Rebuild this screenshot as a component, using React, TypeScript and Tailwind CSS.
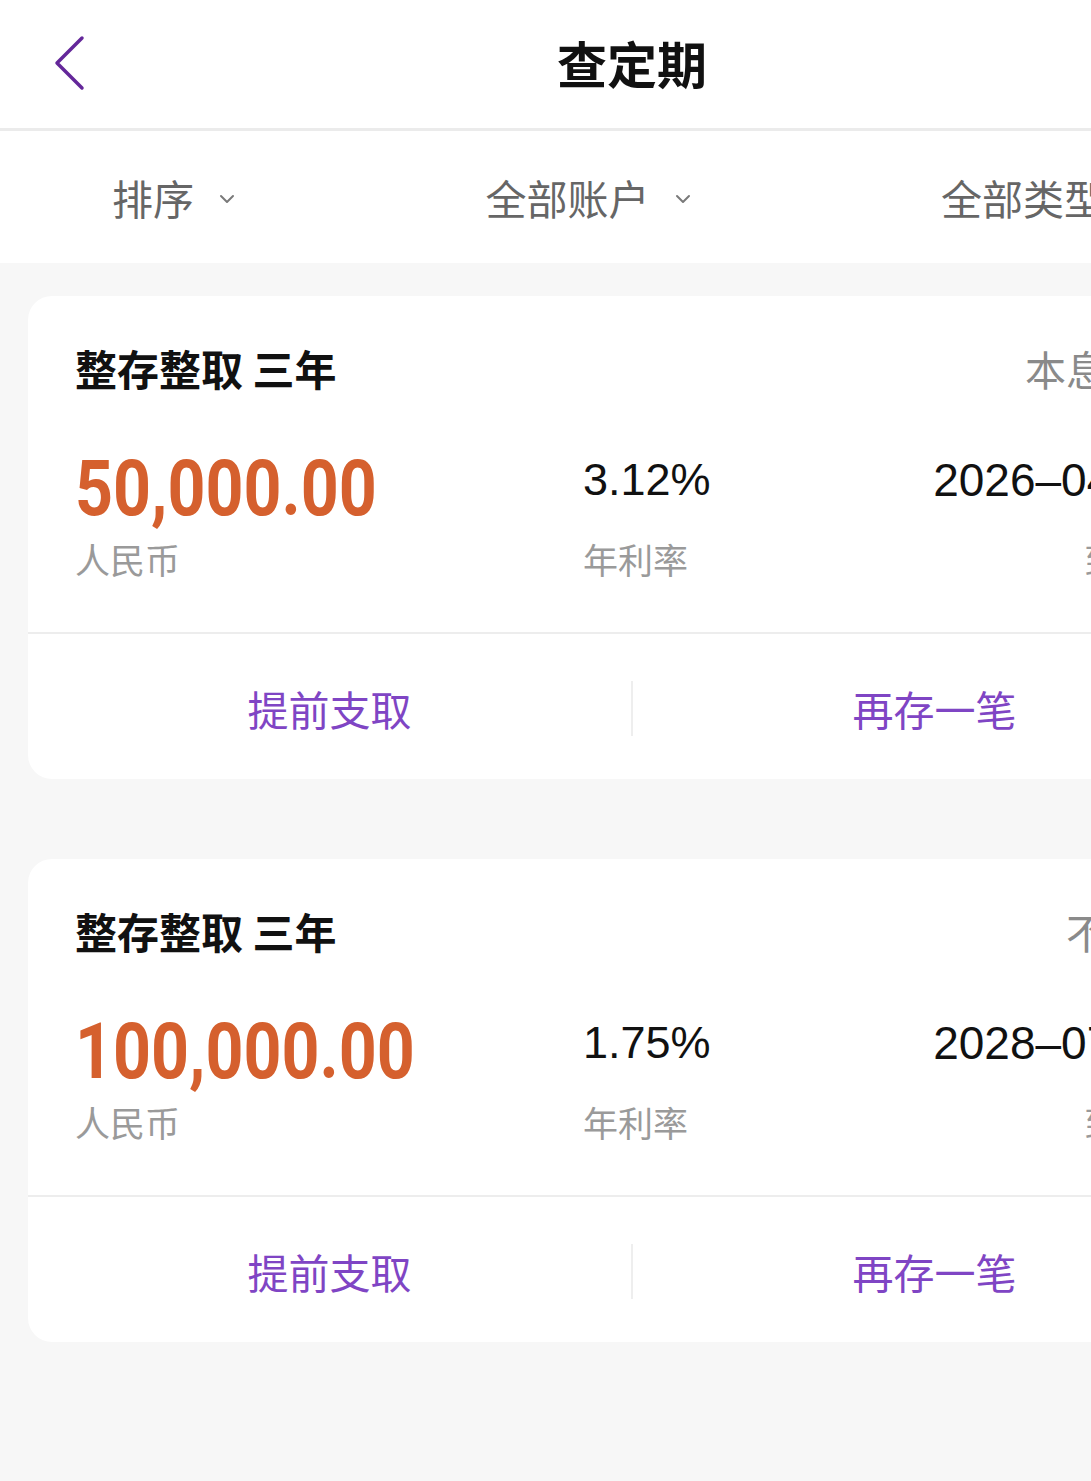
import React from "react";

interface Deposit {
  name: string;
  mode: string;
  amount: string;
  rate: string;
  dueDate: string;
}

const deposits: Deposit[] = [
  { name: "整存整取 三年", mode: "本息转存", amount: "50,000.00", rate: "3.12%", dueDate: "2026–04–18" },
  { name: "整存整取 三年", mode: "不转存", amount: "100,000.00", rate: "1.75%", dueDate: "2028–07–12" },
];

const cjk = "font-['Noto_Sans_CJK_SC','Noto_Sans',sans-serif]";
const num = "font-['Liberation_Sans','Noto_Sans_CJK_SC',sans-serif]";

const ChevronDown = () => (
  <svg width="16" height="10" viewBox="0 0 16 10" fill="none" className="ml-[25px] mt-[4px]">
    <polyline points="2,2 8,8 14,2" stroke="#7a7a7a" strokeWidth="2" strokeLinecap="round" strokeLinejoin="round" />
  </svg>
);

const Filter = ({ label }: { label: string }) => (
  <div className="flex items-center">
    <span className={`${cjk} text-[41px] leading-[48px] text-[#666666]`}>{label}</span>
    <ChevronDown />
  </div>
);

const DepositCard = ({ d }: { d: Deposit }) => (
  <div className="bg-white rounded-[24px]">
    <div className="px-[47px] pt-[50px] pb-[52px] border-b-2 border-[#ededed]">
      <div className="flex items-center justify-between">
        <span className={`${cjk} text-[42px] leading-[44px] font-bold text-[#111111]`}>{d.name}</span>
        <span className={`${cjk} text-[41px] leading-[44px] text-[#8a8a8a]`}>{d.mode}</span>
      </div>
      <div className="grid grid-cols-[508px_1fr_auto] mt-[66px]">
        <div className="flex flex-col">
          <span className="font-['Roboto',sans-serif] font-bold text-[78px] leading-[66px] text-[#d5602e] inline-block origin-left scale-x-[0.85] whitespace-nowrap">
            {d.amount}
          </span>
          <span className={`${cjk} text-[35px] leading-[42px] text-[#9a9a9a] mt-[16px]`}>人民币</span>
        </div>
        <div className="flex flex-col justify-between">
          <span className={`${num} text-[45px] leading-[48px] text-[#111111]`}>{d.rate}</span>
          <span className={`${cjk} text-[35px] leading-[42px] text-[#9a9a9a]`}>年利率</span>
        </div>
        <div className="flex flex-col justify-between items-end">
          <span className={`${num} text-[46px] leading-[48px] text-[#111111] whitespace-nowrap`}>{d.dueDate}</span>
          <span className={`${cjk} text-[35px] leading-[42px] text-[#9a9a9a]`}>到期日</span>
        </div>
      </div>
    </div>
    <div className="flex items-center h-[145px] pt-[4px]">
      <button className={`flex-1 ${cjk} text-[41px] text-[#7f45c4]`}>提前支取</button>
      <div className="w-[2px] h-[55px] bg-[#eeeeee]" />
      <button className={`flex-1 ${cjk} text-[41px] text-[#7f45c4]`}>再存一笔</button>
    </div>
  </div>
);

export default function App() {
  return (
    <div className="w-full min-h-[1481px] overflow-hidden bg-[#f7f7f7]">
      <div className="w-[1264px] min-h-[1481px] flex flex-col">
        <header className="h-[131px] bg-white border-b-[3px] border-[#ebebeb] grid grid-cols-[1fr_auto_1fr] items-center">
          <div className="pl-[52px] pb-[2px]">
            <svg width="36" height="56" viewBox="0 0 36 56" fill="none">
              <polyline points="30,3 5,28 30,53" stroke="#64279a" strokeWidth="3.5" strokeLinecap="round" strokeLinejoin="round" />
            </svg>
          </div>
          <h1 className={`${cjk} text-[50px] leading-[60px] font-bold text-[#111111] pb-[4px]`}>查定期</h1>
          <div />
        </header>
        <div className="h-[132px] bg-white flex items-center justify-between pl-[112px] pr-[118px]">
          <Filter label="排序" />
          <Filter label="全部账户" />
          <Filter label="全部类型" />
        </div>
        <main className="flex flex-col gap-[80px] px-[28px] pt-[33px]">
          {deposits.map((d, i) => (
            <DepositCard key={i} d={d} />
          ))}
        </main>
      </div>
    </div>
  );
}
